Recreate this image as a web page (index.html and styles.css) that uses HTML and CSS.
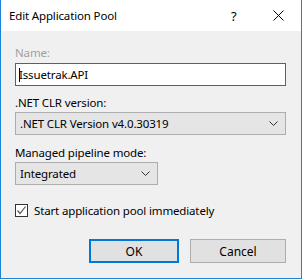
FILE: index.html
```html
<!DOCTYPE html>
<html lang="en">
<head>
  <meta charset="UTF-8">
  <title>Edit Application Pool</title>
  <link rel="stylesheet" href="styles.css">
</head>
<body>

<div class="window">

  <!-- Title bar -->
  <div class="titlebar">
    <span class="title">Edit Application Pool</span>
    <span class="help">?</span>
    <span class="close">
      <svg width="11" height="11" viewBox="0 0 11 11">
        <path d="M0.5 0.5 L10.5 10.5 M10.5 0.5 L0.5 10.5" stroke="#000" stroke-width="1" fill="none"/>
      </svg>
    </span>
  </div>

  <div class="content">
    <div class="label disabled">Name:</div>
    <div class="textbox"><span class="caret"></span>Issuetrak.API</div>

    <div class="label">.NET CLR version:</div>
    <div class="select wide">
      <span>.NET CLR Version v4.0.30319</span>
      <svg class="chevron" width="9" height="5" viewBox="0 0 9 5">
        <path d="M0.5 0.5 L4.5 4.5 L8.5 0.5" stroke="#333" stroke-width="1" fill="none"/>
      </svg>
    </div>

    <div class="label">Managed pipeline mode:</div>
    <div class="select narrow">
      <span>Integrated</span>
      <svg class="chevron" width="9" height="5" viewBox="0 0 9 5">
        <path d="M0.5 0.5 L4.5 4.5 L8.5 0.5" stroke="#333" stroke-width="1" fill="none"/>
      </svg>
    </div>

    <label class="check">
      <span class="box">
        <svg width="11" height="11" viewBox="0 0 11 11">
          <path d="M1.5 5.5 L4 8.5 L9.5 1.5" stroke="#555" stroke-width="1.2" fill="none"/>
        </svg>
      </span>
      Start application pool immediately
    </label>

    <div class="buttons">
      <button class="button default">OK</button>
      <button class="button">Cancel</button>
    </div>
  </div>
</div>

</body>
</html>
```

FILE: styles.css
```css
body {
  margin: 0;
  font-family: "Noto Sans", "Open Sans", sans-serif;
  font-size: 11.5px;
  letter-spacing: -0.15px;
  color: #000;
  background: #fff;
}

.window {
  width: 302px;
  height: 279px;
  box-sizing: border-box;
  border: 1px solid #1883d7;
  border-top: none;
  background: #f0f0f0;
  display: flex;
  flex-direction: column;
}

.titlebar {
  height: 31px;
  background: #fff;
  display: flex;
  align-items: center;
  flex-shrink: 0;
}

.title {
  margin-left: 8px;
  flex: 1;
}

.help {
  width: 14px;
  margin-right: 28px;
  font-size: 13px;
}

.close {
  width: 11px;
  height: 11px;
  margin-right: 17px;
}

.close svg {
  display: block;
}

.content {
  padding: 14px 15px 0 14px;
}

.label {
  height: 16px;
  line-height: 16px;
}

.disabled {
  color: #a0a0a0;
}

.textbox {
  margin-top: 2px;
  height: 23px;
  box-sizing: border-box;
  border: 1px solid #0078d7;
  background: #fff;
  display: flex;
  align-items: center;
  padding-left: 3px;
}

.caret {
  width: 1px;
  height: 14px;
  background: #000;
  margin-right: -1px;
}

.textbox + .label {
  margin-top: 9px;
}

.select {
  margin-top: 1px;
  height: 23px;
  box-sizing: border-box;
  border: 1px solid #adadad;
  background: #e5e5e5;
  display: flex;
  align-items: center;
  justify-content: space-between;
  padding: 0 7px 0 4px;
}

.select.wide + .label {
  margin-top: 10px;
}

.narrow {
  width: 143px;
}

.chevron {
  display: block;
}

.check {
  display: flex;
  align-items: center;
  margin-top: 17px;
  height: 16px;
}

.box {
  width: 13px;
  height: 13px;
  box-sizing: border-box;
  border: 1px solid #333;
  background: #fff;
  margin-right: 6px;
  display: flex;
  align-items: center;
  justify-content: center;
}

.box svg {
  display: block;
}

.buttons {
  display: flex;
  justify-content: flex-end;
  gap: 11px;
  margin-top: 21px;
}

.button {
  font-family: inherit;
  font-size: 12px;
  width: 96px;
  height: 24px;
  box-sizing: border-box;
  border: 1px solid #adadad;
  background: #e1e1e1;
  color: #000;
  padding: 0;
}

.button.default {
  width: 90px;
  border: 2px solid #0078d7;
}
```
